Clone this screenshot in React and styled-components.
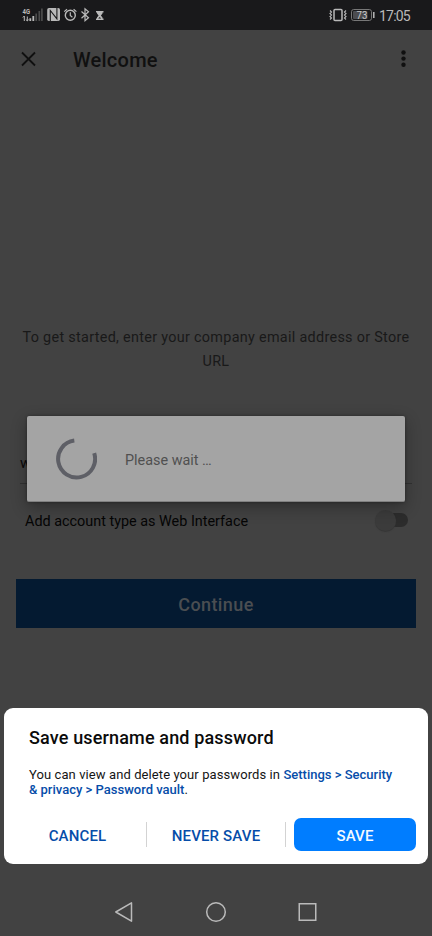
import React from 'react';
import styled, { createGlobalStyle } from 'styled-components';

const GlobalStyle = createGlobalStyle`
  * { box-sizing: border-box; }
  body { margin: 0; background: #424242; font-family: Roboto, sans-serif; }
  button { font-family: inherit; border: 0; padding: 0; background: none; }
`;

const Screen = styled.div`
  position: relative;
  display: flex;
  flex-direction: column;
  width: 432px;
  height: 936px;
  overflow: hidden;
  background: #424242;
`;

const StatusBar = styled.header`
  display: flex;
  justify-content: space-between;
  height: 30px;
  background: #19191b;
  color: #b9b9b9;
`;

const StatusIcons = styled.svg`
  display: block;
  flex: none;
`;

const StatusRight = styled.div`
  display: flex;
  align-items: center;
  padding-right: 22px;
`;

const Clock = styled.span`
  font-size: 14px;
  line-height: 30px;
  width: 31px;
  white-space: nowrap;
  letter-spacing: -0.8px;
  padding-top: 1px;
`;

const AppBar = styled.div`
  display: flex;
  align-items: center;
  height: 58px;
  padding: 0 20px;
  color: #101010;
`;

const AppTitle = styled.h1`
  flex: 1;
  margin: 1px 0 0 36px;
  font-size: 20px;
  font-weight: 500;
  letter-spacing: 0.25px;
`;

const Intro = styled.p`
  margin: 238px 16px 0;
  font-size: 14.4px;
  line-height: 24px;
  letter-spacing: 0.3px;
  text-align: center;
  color: #191919;
`;

const Field = styled.div`
  height: 36px;
  margin: 74px 20px 0;
  padding-top: 6px;
  border-bottom: 1px solid #323232;
  color: #090909;
  font-size: 15px;
  line-height: 18px;
`;

const ToggleRow = styled.div`
  display: flex;
  align-items: center;
  justify-content: space-between;
  height: 24px;
  margin: 25px 24px 0 25px;
  font-size: 14.4px;
  color: #050505;
`;

const Track = styled.span`
  display: flex;
  align-items: center;
  width: 32px;
  height: 14px;
  margin-bottom: 2px;
  border-radius: 7px;
  background: #2c2c2c;
`;

const Thumb = styled.span`
  width: 21px;
  height: 21px;
  margin-left: -1px;
  border-radius: 50%;
  background: #3b3b3b;
  box-shadow: 0 1px 1px #363636;
`;

const ContinueButton = styled.button`
  height: 49px;
  margin: 46px 16px 0;
  padding-top: 2px;
  background: #041a31;
  color: #4b4e51;
  font-size: 18px;
  font-weight: 500;
  letter-spacing: 0.4px;
`;

const NavBar = styled.nav`
  display: flex;
  align-items: center;
  justify-content: space-between;
  height: 48px;
  margin-top: auto;
  padding: 0 114px 0 113px;
  color: #bababa;
`;

const Progress = styled.div`
  position: absolute;
  top: 416px;
  left: 27px;
  display: flex;
  align-items: center;
  width: 378px;
  height: 86px;
  padding-left: 28px;
  border-radius: 2px;
  border-bottom: 1px solid #808080;
  background: #a4a4a4;
  box-shadow: 0 5px 16px rgba(0, 0, 0, 0.32), 0 0 3px rgba(0, 0, 0, 0.35);
`;

const ProgressText = styled.span`
  margin: 3px 0 0 28px;
  font-size: 14.4px;
  color: #505050;
`;

const Sheet = styled.section`
  position: absolute;
  top: 708px;
  left: 4px;
  width: 424px;
  height: 156px;
  padding: 18px 12px 0 12px;
  border-radius: 9px;
  background: #fff;
`;

const SheetTitle = styled.h2`
  margin: 0 0 0 13px;
  font-size: 18px;
  line-height: 24px;
  font-weight: 500;
  letter-spacing: 0.15px;
  color: #0b0b0b;
`;

const SheetText = styled.p`
  margin: 17px 0 0 13px;
  font-size: 13px;
  line-height: 15px;
  letter-spacing: 0.09px;
  color: #151515;
  white-space: nowrap;
`;

const Path = styled.strong`
  font-weight: 500;
  color: #064da9;
  letter-spacing: 0;
`;

const Actions = styled.div`
  display: grid;
  grid-template-columns: 130px 1px 138px 1px 130px;
  align-items: center;
  height: 33px;
  margin-top: 21px;
`;

const Divider = styled.span`
  height: 25px;
  background: #d3d3d3;
`;

const Action = styled.button`
  height: 33px;
  padding-top: 2px;
  padding-right: ${(p) => p.$shift || '0'};
  font-size: 15px;
  font-weight: 500;
  letter-spacing: 0.15px;
  color: #064da9;
`;

const PrimaryAction = styled(Action)`
  margin-left: 8px;
  width: 122px;
  border-radius: 7px;
  background: #007dff;
  color: #f5faff;
`;

function LeftStatus() {
  return (
    <StatusIcons width="120" height="30" fill="none" stroke="currentColor">
      <text x="22.5" y="14" fontSize="7" fontWeight="700" fill="currentColor" stroke="none" textLength="7.5" lengthAdjust="spacingAndGlyphs">4G</text>
      <path d="M24.3 16v5M22.8 17.5l1.5-1.5M27.3 16.5V21M25.9 19.5l1.4 1.4 1.4-1.4" strokeWidth="1" />
      <path d="M30.3 18.3V21M33.3 16v5" strokeWidth="1.8" />
      <path d="M36.2 13.5V21M39.3 11v10M41.9 8.5V21" stroke="#4c4c4c" strokeWidth="1.7" />
      <rect x="47.2" y="8" width="12.8" height="13" rx="1.8" fill="currentColor" stroke="none" />
      <path d="M50.3 21V10.5l6.6 8.3V8" stroke="#19191b" strokeWidth="1.1" />
      <circle cx="70.3" cy="15.3" r="5" strokeWidth="1.4" />
      <path d="M70.3 12.2v3.3l2.1 1.7M64.2 11.6l2.8-2.4M73.6 9.2l2.8 2.4" strokeWidth="1.2" />
      <path d="m81.5 11.5 7 6.3-3.5 2.9V8.8l3.5 2.9-7 6.5" strokeWidth="1.2" />
      <path d="M96 11h7.5v1.5h-1v1l-1.6 2 1.6 2v1h1V20H96v-1.500h1v-1l1.600-2-1.600-2v-1h-1z" fill="currentColor" stroke="none" />
      <path d="m98.2 18.4 1.5-1.3 1.5 1.3z" fill="#19191b" stroke="none" />
    </StatusIcons>
  );
}

function DeviceStatus() {
  return (
    <StatusIcons width="50" height="30" fill="none" stroke="currentColor">
      <rect x="5" y="9.5" width="8" height="11" rx="1" strokeWidth="1.5" />
      <path d="m1 10.500 1.500 1.500L1 13.500 2.500 15 1 16.500 2.500 18 1 19.500M17 10.500 15.500 12l1.500 1.500-1.500 1.500 1.500 1.500-1.500 1.500 1.500 1.500" strokeWidth="1.1" />
      <rect x="22.5" y="9.5" width="20" height="11" rx="2.2" stroke="#777" />
      <rect x="24" y="11" width="14.5" height="8" rx="1" fill="#4b4c50" stroke="none" />
      <path d="M44.8 12v6" strokeWidth="1.5" />
      <text x="27.5" y="19" fontSize="11" textLength="10.8" lengthAdjust="spacingAndGlyphs" fill="#c8c8c8" stroke="none">73</text>
    </StatusIcons>
  );
}

export default function App() {
  return (
    <>
      <GlobalStyle />
      <Screen>
        <StatusBar>
          <LeftStatus />
          <StatusRight>
            <DeviceStatus />
            <Clock>17:05</Clock>
          </StatusRight>
        </StatusBar>
        <AppBar>
          <svg width="17" height="17" fill="none" stroke="currentColor" strokeWidth="1.8">
            <path d="m2 1.5 13 13M15 1.5l-13 13" />
          </svg>
          <AppTitle>Welcome</AppTitle>
          <svg width="18" height="18" fill="currentColor">
            <circle cx="9.5" cy="2.5" r="2.2" />
            <circle cx="9.5" cy="8.6" r="2.2" />
            <circle cx="9.5" cy="14.7" r="2.2" />
          </svg>
        </AppBar>
        <Intro>To get started, enter your company email address or Store URL</Intro>
        <Field>w</Field>
        <ToggleRow>
          <span>Add account type as Web Interface</span>
          <Track><Thumb /></Track>
        </ToggleRow>
        <ContinueButton>Continue</ContinueButton>
        <NavBar>
          <svg width="20" height="22" fill="none" stroke="currentColor" strokeWidth="1.5" strokeLinejoin="round">
            <path d="M18.5 1.8v18.4L2.8 11z" />
          </svg>
          <svg width="22" height="22" fill="none" stroke="currentColor" strokeWidth="1.5">
            <circle cx="11" cy="11" r="9.3" />
          </svg>
          <svg width="20" height="20" fill="none" stroke="currentColor" strokeWidth="1.5">
            <rect x="1.25" y="1.75" width="16.5" height="16.5" />
          </svg>
        </NavBar>
        <Progress>
          <svg width="42" height="42" fill="none" stroke="#5e5f66" strokeWidth="4">
            <path d="M19.3 2.6A18.500 18.500 0 1 0 39.2 15.2" />
          </svg>
          <ProgressText>Please wait …</ProgressText>
        </Progress>
        <Sheet>
          <SheetTitle>Save username and password</SheetTitle>
          <SheetText>
            You can view and delete your passwords in <Path>Settings &gt; Security</Path>
            <br />
            <Path>&amp; privacy &gt; Password vault</Path>.
          </SheetText>
          <Actions>
            <Action $shift="7px">CANCEL</Action>
            <Divider />
            <Action>NEVER SAVE</Action>
            <Divider />
            <PrimaryAction>SAVE</PrimaryAction>
          </Actions>
        </Sheet>
      </Screen>
    </>
  );
}
